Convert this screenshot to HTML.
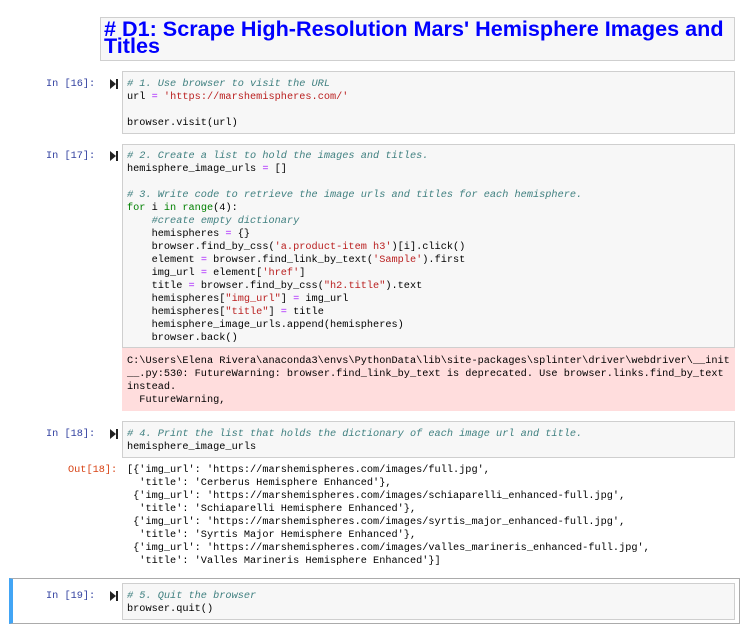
<html><head><style>
body{margin:0;width:750px;height:634px;background:#fff;position:relative;overflow:hidden;font-family:"Liberation Mono",monospace;font-size:10.25px;color:#000}
.b{position:absolute;background:#f7f7f7;border:1px solid #cfcfcf;box-sizing:border-box}
.l{position:absolute;white-space:pre;line-height:13px}
.p{position:absolute;white-space:pre;color:#303F9F;line-height:13px}
.o{position:absolute;white-space:pre;color:#D84315;line-height:13px}
.r{position:absolute;width:9px;height:10px}
.c{color:#408080;font-style:italic}.s{color:#BA2121}.k{color:#008000}.e{color:#AA22FF}.g{color:#008000}
</style></head><body>
<div class="b" style="left:100px;top:17px;width:635px;height:44px"></div>
<div style="position:absolute;left:104px;top:20px;font:bold 21.6px/17px 'Liberation Sans',sans-serif;color:#0000ff">#&nbsp;D1: Scrape High-Resolution Mars' Hemisphere Images and<br>Titles</div>

<div class="p" style="left:46px;top:78px">In [16]:</div><svg class="r" style="left:110px;top:79px" viewBox="0 0 9 10"><path d="M0 0L6 5L0 10Z" fill="#222"/><rect x="6" y="0" width="2" height="10" fill="#222"/></svg>
<div class="b" style="left:122px;top:71px;width:613px;height:63px"></div>
<div class="l" style="left:127px;top:78px"><span class="c"># 1. Use browser to visit the URL</span>
url <span class="e">=</span> <span class="s">'https://marshemispheres.com/'</span>

browser.visit(url)</div>

<div class="p" style="left:46px;top:150px">In [17]:</div><svg class="r" style="left:110px;top:151px" viewBox="0 0 9 10"><path d="M0 0L6 5L0 10Z" fill="#222"/><rect x="6" y="0" width="2" height="10" fill="#222"/></svg>
<div class="b" style="left:122px;top:144px;width:613px;height:204px"></div>
<div class="l" style="left:127px;top:150px"><span class="c"># 2. Create a list to hold the images and titles.</span>
hemisphere_image_urls <span class="e">=</span> []

<span class="c"># 3. Write code to retrieve the image urls and titles for each hemisphere.</span>
<span class="k">for</span> i <span class="k">in</span> <span class="g">range</span>(4):
    <span class="c">#create empty dictionary</span>
    hemispheres <span class="e">=</span> {}
    browser.find_by_css(<span class="s">'a.product-item h3'</span>)[i].click()
    element <span class="e">=</span> browser.find_link_by_text(<span class="s">'Sample'</span>).first
    img_url <span class="e">=</span> element[<span class="s">'href'</span>]
    title <span class="e">=</span> browser.find_by_css(<span class="s">"h2.title"</span>).text
    hemispheres[<span class="s">"img_url"</span>] <span class="e">=</span> img_url
    hemispheres[<span class="s">"title"</span>] <span class="e">=</span> title
    hemisphere_image_urls.append(hemispheres)
    browser.back()</div>
<div style="position:absolute;left:122px;top:348px;width:613px;height:63px;background:#fdd"></div>
<div class="l" style="left:127px;top:355px">C:\Users\Elena Rivera\anaconda3\envs\PythonData\lib\site-packages\splinter\driver\webdriver\__init
__.py:530: FutureWarning: browser.find_link_by_text is deprecated. Use browser.links.find_by_text
instead.
  FutureWarning,</div>

<div class="p" style="left:46px;top:428px">In [18]:</div><svg class="r" style="left:110px;top:429px" viewBox="0 0 9 10"><path d="M0 0L6 5L0 10Z" fill="#222"/><rect x="6" y="0" width="2" height="10" fill="#222"/></svg>
<div class="b" style="left:122px;top:421px;width:613px;height:37px"></div>
<div class="l" style="left:127px;top:428px"><span class="c"># 4. Print the list that holds the dictionary of each image url and title.</span>
hemisphere_image_urls</div>
<div class="o" style="left:68px;top:464px">Out[18]:</div>
<div class="l" style="left:127px;top:464px">[{'img_url': 'https://marshemispheres.com/images/full.jpg',
  'title': 'Cerberus Hemisphere Enhanced'},
 {'img_url': 'https://marshemispheres.com/images/schiaparelli_enhanced-full.jpg',
  'title': 'Schiaparelli Hemisphere Enhanced'},
 {'img_url': 'https://marshemispheres.com/images/syrtis_major_enhanced-full.jpg',
  'title': 'Syrtis Major Hemisphere Enhanced'},
 {'img_url': 'https://marshemispheres.com/images/valles_marineris_enhanced-full.jpg',
  'title': 'Valles Marineris Hemisphere Enhanced'}]</div>

<div style="position:absolute;left:9px;top:578px;width:731px;height:46px;border:1px solid #ababab;box-sizing:border-box;border-left:4px solid #42A5F5"></div>
<div class="p" style="left:46px;top:590px">In [19]:</div><svg class="r" style="left:110px;top:591px" viewBox="0 0 9 10"><path d="M0 0L6 5L0 10Z" fill="#222"/><rect x="6" y="0" width="2" height="10" fill="#222"/></svg>
<div class="b" style="left:122px;top:583px;width:613px;height:37px"></div>
<div class="l" style="left:127px;top:590px"><span class="c"># 5. Quit the browser</span>
browser.quit()</div>
</body></html>
